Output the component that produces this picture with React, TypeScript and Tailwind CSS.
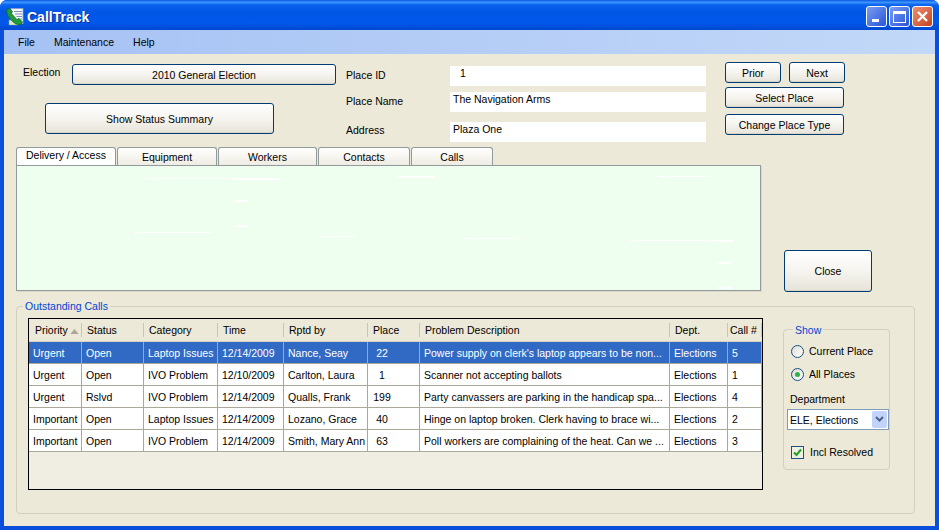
import React from "react";

const font = "font-['Liberation_Sans',sans-serif] text-[10.5px] leading-[14px]";
const btn =
  "flex items-center justify-center rounded-[3px] border border-[#003c74] bg-gradient-to-b from-white via-[#f5f4ef] to-[#e6e3d8] text-black shadow-[inset_0_-1px_0_#d8d4c6]";
const tab =
  "flex items-end justify-center rounded-t-[3px] border border-b-0 border-[#919b9c] bg-gradient-to-b from-white to-[#eeece2] h-[18px] text-black";
const hd = "relative h-[23px] whitespace-nowrap border-b border-[#d6d2c2] bg-[#ece9d8] text-left font-normal";
const Sep = () => <span className="absolute right-0 top-[4px] h-[14px] w-[1px] bg-[#c8c5b4]" />;

const cols = [53, 62, 74, 66, 84, 52, 250, 58, 34];
const heads = ["Priority", "Status", "Category", "Time", "Rptd by", "Place", "Problem Description", "Dept.", "Call #"];
const rows = [
  ["Urgent", "Open", "Laptop Issues", "12/14/2009", "Nance, Seay", "22", "Power supply on clerk's laptop appears to be non...", "Elections", "5"],
  ["Urgent", "Open", "IVO Problem", "12/10/2009", "Carlton, Laura", "1", "Scanner not accepting ballots", "Elections", "1"],
  ["Urgent", "Rslvd", "IVO Problem", "12/14/2009", "Qualls, Frank", "199", "Party canvassers are parking in the handicap spa...", "Elections", "4"],
  ["Important", "Open", "Laptop Issues", "12/14/2009", "Lozano, Grace", "40", "Hinge on laptop broken. Clerk having to brace wi...", "Elections", "2"],
  ["Important", "Open", "IVO Problem", "12/14/2009", "Smith, Mary Ann", "63", "Poll workers are complaining of the heat. Can we ...", "Elections", "3"],
];

function AppIcon() {
  return (
    <svg width="20" height="20" viewBox="0 0 20 20" className="shrink-0">
      <rect x="6" y="1.5" width="12" height="15" fill="#f4f6fa" stroke="#8aa0c0" strokeWidth="0.8" />
      <path d="M9 4.5h8M10 7h7M11.5 9.5h5.5M13 12h4" stroke="#7d92b8" strokeWidth="1" />
      <rect x="4" y="13" width="9" height="5" fill="#dfe8c8" stroke="#7fa070" strokeWidth="0.5" />
      <path d="M1.5 3.5 L4 1 L7.5 4.5 L6.5 6.5 L12 12.5 L14 11.5 L17.5 15 L15.5 18 Q10 18 5.5 12.5 Q1.5 8 1.5 3.5Z" fill="#1f9b3c" stroke="#0c5a22" strokeWidth="0.6" />
    </svg>
  );
}

function Radio({ on }: { on?: boolean }) {
  return (
    <span className="flex h-[13px] w-[13px] items-center justify-center rounded-full border border-[#1c5180] bg-gradient-to-br from-[#dcdcd4] to-white">
      {on && <span className="h-[5px] w-[5px] rounded-full bg-[#2fb24a]" />}
    </span>
  );
}

export default function App() {
  return (
    <div className={`${font} flex h-[530px] w-[939px] flex-col overflow-hidden rounded-t-[7px] bg-[#0a4fdc] text-black`}>
      <div className="flex h-[30px] shrink-0 items-center bg-[linear-gradient(180deg,#0a5ae0_0%,#3d95ff_8%,#0a63ee_16%,#0055e5_40%,#0058ec_75%,#0048cf_100%)] pl-[5px] pr-[6px] pt-[3px]">
        <AppIcon />
        <span className="ml-[2px] text-[14px] font-bold text-white [text-shadow:1px_1px_0_#0a2f9c]">CallTrack</span>
        <div className="ml-auto flex gap-[2px]">
          <div className="flex h-[21px] w-[21px] items-end rounded-[3px] border border-white bg-gradient-to-br from-[#7a9cf0] to-[#2a52d8] pb-[4px] pl-[5px]">
            <span className="h-[3px] w-[7px] bg-white" />
          </div>
          <div className="flex h-[21px] w-[21px] items-center justify-center rounded-[3px] border border-white bg-gradient-to-br from-[#7a9cf0] to-[#2a52d8]">
            <span className="h-[12px] w-[13px] border border-t-[3px] border-white" />
          </div>
          <div className="flex h-[21px] w-[21px] items-center justify-center rounded-[3px] border border-white bg-gradient-to-br from-[#ec8f70] to-[#c8401a]">
            <svg width="13" height="13" viewBox="0 0 13 13"><path d="M2 2l9 9M11 2l-9 9" stroke="#fff" strokeWidth="2.4" /></svg>
          </div>
        </div>
      </div>

      <div className="mx-[4px] mb-[4px] flex min-h-0 flex-1 flex-col">
        <nav className="flex h-[24px] shrink-0 items-center gap-[19px] bg-gradient-to-r from-[#a6c2f4] to-[#c2d8f8] pl-[14px]">
          <span>File</span>
          <span>Maintenance</span>
          <span>Help</span>
        </nav>

        <main className="flex flex-1 flex-col bg-[#ece9d8]">
          <div className="flex h-[93px] shrink-0">
            <div className="w-[332px] shrink-0 pl-[19px] pt-[10px]">
              <div className="flex">
                <span className="w-[49px] pt-[1px]">Election</span>
                <button className={`${btn} h-[21px] w-[264px]`}>2010 General Election</button>
              </div>
              <button className={`${btn} ml-[22px] mt-[18px] h-[31px] w-[229px]`}>Show Status Summary</button>
            </div>

            <div className="ml-[10px] w-[360px] shrink-0 pt-[12px]">
              <div className="flex h-[20px]">
                <span className="w-[104px] pt-[2px]">Place ID</span>
                <div className="h-[20px] w-[256px] bg-white pl-[10px]">1</div>
              </div>
              <div className="mt-[6px] flex h-[20px]">
                <span className="w-[104px] pt-[2px]">Place Name</span>
                <div className="h-[20px] w-[256px] bg-white pl-[3px]">The Navigation Arms</div>
              </div>
              <div className="mt-[10px] flex h-[20px]">
                <span className="w-[104px] pt-[1px]">Address</span>
                <div className="h-[20px] w-[256px] bg-white pl-[3px]">Plaza One</div>
              </div>
            </div>

            <div className="ml-[19px] w-[120px] shrink-0 pt-[8px]">
              <div className="flex gap-[8px]">
                <button className={`${btn} h-[21px] w-[56px]`}>Prior</button>
                <button className={`${btn} h-[21px] w-[56px]`}>Next</button>
              </div>
              <button className={`${btn} mt-[4px] h-[21px] w-[119px]`}>Select Place</button>
              <button className={`${btn} mt-[6px] h-[21px] w-[119px]`}>Change Place Type</button>
            </div>
          </div>

          <div className="ml-[12px] flex h-[145px] shrink-0">
            <div className="w-[745px] shrink-0">
              <div className="flex h-[18px] items-end gap-[1px]">
                <div className={`${tab} w-[100px] !items-start from-white to-white`}>Delivery / Access</div>
                <div className={`${tab} w-[100px] pb-[1px]`}>Equipment</div>
                <div className={`${tab} w-[99px] pb-[1px]`}>Workers</div>
                <div className={`${tab} w-[92px] pb-[1px]`}>Contacts</div>
                <div className={`${tab} w-[82px] pb-[1px]`}>Calls</div>
              </div>
              <div className="relative h-[126px] border border-[#919b9c] bg-[#efffef] shadow-[1px_1px_0_#dcd9c8]">
                <svg className="absolute left-0 top-0" width="743" height="124" fill="#fff">
                  <rect x="129" y="12" width="90" height="1" />
                  <rect x="218" y="12" width="45" height="2" />
                  <rect x="218" y="34" width="13" height="2" />
                  <rect x="218" y="59" width="13" height="2" />
                  <rect x="381" y="10" width="37" height="2" />
                  <rect x="117" y="66" width="79" height="1" />
                  <rect x="305" y="70" width="34" height="1" />
                  <rect x="641" y="10" width="52" height="1" />
                  <rect x="448" y="72" width="55" height="1" />
                  <rect x="612" y="74" width="90" height="1" />
                  <rect x="701" y="74" width="15" height="2" />
                  <rect x="701" y="96" width="13" height="2" />
                  <rect x="701" y="121" width="13" height="2" />
                </svg>
              </div>
            </div>
            <button className={`${btn} ml-[23px] mt-[103px] h-[42px] w-[88px]`}>Close</button>
          </div>

          <section className="relative ml-[12px] mt-[14px] flex h-[208px] w-[899px] shrink-0 rounded-[4px] border border-[#d0d0bf]">
            <span className="absolute -top-[8px] left-[6px] bg-[#ece9d8] px-[2px] text-[#0046d5]">Outstanding Calls</span>

            <div className="ml-[11px] mt-[11px] h-[172px] w-[735px] shrink-0 overflow-hidden border border-black bg-[#f0eee2]">
              <table className="w-[733px] table-fixed border-separate border-spacing-0">
                <colgroup>
                  {cols.map((w, i) => (
                    <col key={i} style={{ width: w }} />
                  ))}
                </colgroup>
                <thead>
                  <tr>
                    {heads.map((h, i) => (
                      <th key={h} className={`${hd} ${i === 8 ? "pl-[2px]" : i === 0 ? "pl-[6px]" : "pl-[5px]"}`}>
                        {h}
                        {i === 0 && (
                          <svg width="9" height="5" viewBox="0 0 10 6" className="ml-[2px] inline-block align-baseline">
                            <path d="M5 0L10 6H0Z" fill="#aca899" />
                          </svg>
                        )}
                        <Sep />
                      </th>
                    ))}
                  </tr>
                </thead>
                <tbody>
                  {rows.map((r, ri) => (
                    <tr key={ri} className={ri === 0 ? "bg-[#316ac5] text-white" : "bg-white"}>
                      {r.map((c, ci) => (
                        <td key={ci} className="h-[22px] overflow-hidden whitespace-nowrap border-b border-r border-[#aca899] pl-[4px]">
                          {ci === 5 ? <span className="inline-block w-[20px] text-center">{c}</span> : c}
                        </td>
                      ))}
                    </tr>
                  ))}
                </tbody>
              </table>
            </div>

            <div className="relative ml-[20px] mt-[22px] flex h-[141px] w-[107px] shrink-0 flex-col rounded-[4px] border border-[#d0d0bf] pl-[3px] pt-[14px]">
              <span className="absolute -top-[7px] left-[9px] bg-[#ece9d8] px-[2px] text-[#0046d5]">Show</span>
              <label className="ml-[4px] flex items-center gap-[5px]"><Radio />Current Place</label>
              <label className="ml-[4px] mt-[9px] flex items-center gap-[5px]"><Radio on />All Places</label>
              <span className="ml-[3px] mt-[11px]">Department</span>
              <div className="mt-[3px] flex h-[21px] w-[102px] items-center justify-between border border-[#7f9db9] bg-white pl-[2px] pr-[1px]">
                <span>ELE, Elections</span>
                <span className="flex h-[17px] w-[15px] items-center justify-center rounded-[2px] bg-[#c1d3fb]">
                  <svg width="9" height="7" viewBox="0 0 9 7"><path d="M1 1l3.5 3.5L8 1" fill="none" stroke="#4d6185" strokeWidth="2" /></svg>
                </span>
              </div>
              <label className="ml-[4px] mt-[15px] flex items-center gap-[6px]">
                <span className="flex h-[13px] w-[13px] items-center justify-center border border-[#1c5180] bg-[#f0efe6]">
                  <svg width="9" height="9" viewBox="0 0 9 9"><path d="M1 4.5l2.5 2.5L8 1.5" fill="none" stroke="#21a121" strokeWidth="2" /></svg>
                </span>
                Incl Resolved
              </label>
            </div>
          </section>
        </main>
      </div>
    </div>
  );
}
